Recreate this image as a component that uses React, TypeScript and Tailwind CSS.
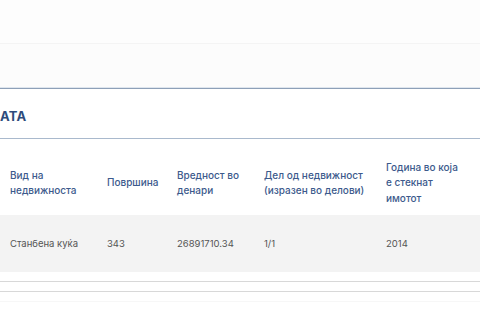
import React from "react";

const headers: React.ReactNode[] = [
  <>Вид на<br />недвижноста</>,
  <>Површина</>,
  <>Вредност во<br />денари</>,
  <>Дел од недвижност<br />(изразен во делови)</>,
  <>Година во која<br />е стекнат<br />имотот</>,
];

const row = ["Станбена куќа", "343", "26891710.34", "1/1", "2014"];

export default function App() {
  return (
    <div
      className="w-[480px] h-[320px] overflow-hidden bg-white"
      style={{ fontFamily: "Inter, 'Noto Sans', sans-serif" }}
    >
      {/* top bar */}
      <div className="h-[44px] bg-[#fdfdfd] border-b border-[#f4f4f4]" />
      <div className="h-[45px] bg-[#fcfcfc] border-b border-[#8ea0b8] shadow-[0_-1px_0_#dfe6ee_inset]" />

      {/* section title */}
      <div className="h-[50px] border-b border-[#a9b9cd] flex items-center">
        <h2 className="text-[13px] font-bold text-[#2e4b7b] tracking-[0.2px] mt-[6px]">АТА</h2>
      </div>

      {/* table */}
      <div className="grid grid-cols-[97px_70px_87px_122px_1fr]">
        {headers.map((h, i) => (
          <div
            key={i}
            className="h-[76px] pl-[10px] pt-[12px] flex items-center text-[10px] leading-[15.5px] font-medium text-[#3c5a8c]"
          >
            <span>{h}</span>
          </div>
        ))}
        {row.map((c, i) => (
          <div
            key={i}
            className="h-[57px] pl-[10px] pt-[2px] flex items-center bg-[#f3f3f3] text-[9.5px] text-[#555555]"
          >
            {c}
          </div>
        ))}
      </div>

      <div className="h-[10px] border-b border-[#d8d8d8]" />
      <div className="h-[10px] border-b border-[#d8d8d8]" />
      <div className="h-[10px] border-b border-[#f7f7f7]" />
    </div>
  );
}
